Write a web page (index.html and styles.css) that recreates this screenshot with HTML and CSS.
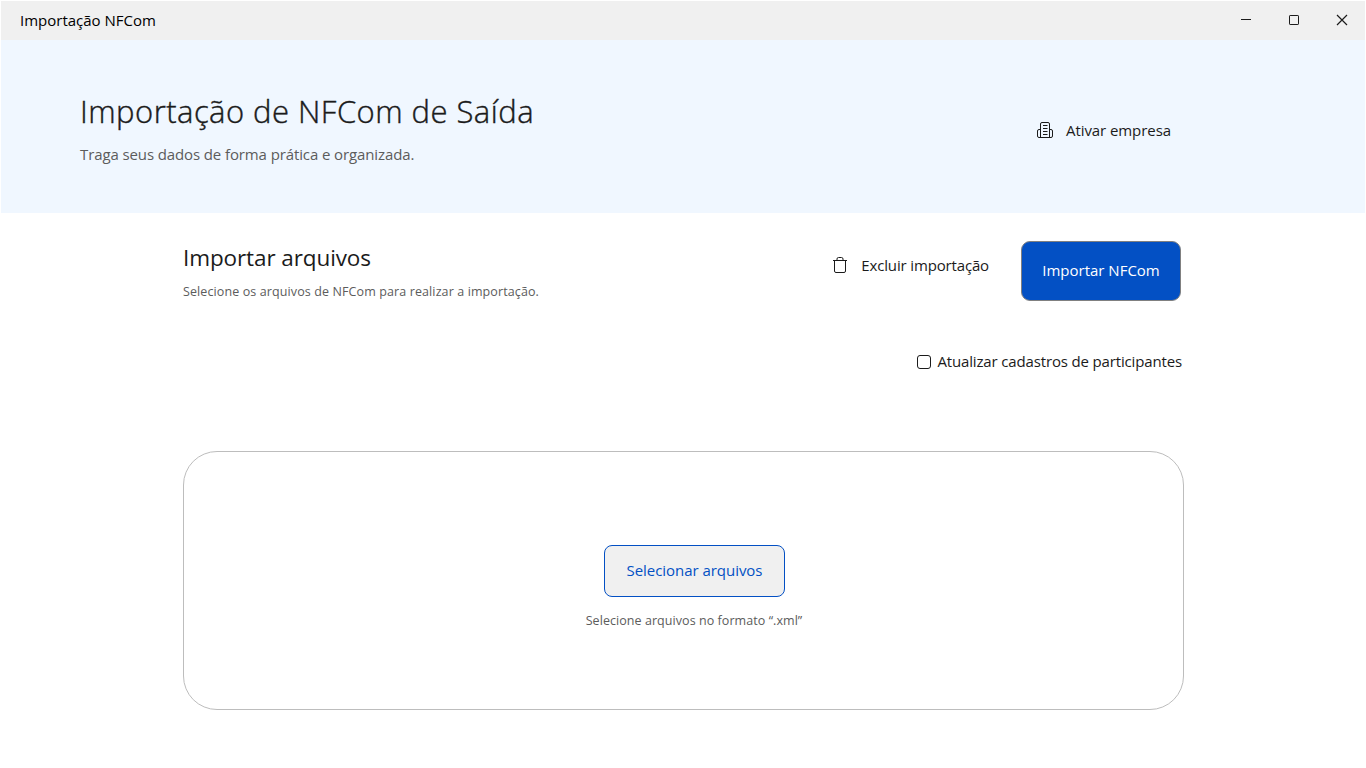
FILE: index.html
```html
<!DOCTYPE html>
<html lang="pt-BR">
<head>
    <meta charset="UTF-8" />
    <meta name="viewport" content="width=device-width, initial-scale=1.0" />
    <title>Importação NFCom</title>
    <link rel="stylesheet" href="styles.css">
</head>
<body>
    <!-- Title bar -->
    <header class="titlebar">
        <span class="titlebar-text">Importação NFCom</span>
        <div class="titlebar-controls">
            <svg class="control" viewBox="0 0 12 12"><path d="M1 5.5h10" /></svg>
            <svg class="control" viewBox="0 0 12 12"><rect x="1.5" y="1.5" width="9" height="9" rx="0.6" /></svg>
            <svg class="control" viewBox="0 0 12 12"><path d="M1 1l10 10M11 1L1 11" stroke-width="1.2" /></svg>
        </div>
    </header>

    <!-- Hero -->
    <section class="hero">
        <div class="hero-texts">
            <h1 class="hero-title">Importação de NFCom de Saída</h1>
            <p class="hero-subtitle">Traga seus dados de forma prática e organizada.</p>
        </div>
        <button class="btn-link btn-company" type="button">
            <svg class="icon" viewBox="0 0 18 18">
                <path d="M4.5 16.5V3A1.5 1.5 0 0 1 6 1.5h6A1.5 1.5 0 0 1 13.5 3v13.5" />
                <path d="M4.5 8.5H3A1.5 1.5 0 0 0 1.5 10v5A1.5 1.5 0 0 0 3 16.5h12a1.5 1.5 0 0 0 1.5-1.5v-5A1.5 1.5 0 0 0 15 8.5h-1.5" />
                <path d="M7 4.5h4.5M7 7.5h4.5M7 10.5h4.5M7 13.5h4.5" />
            </svg>
            <span class="company-text">Ativar empresa</span>
        </button>
    </section>

    <!-- Import section -->
    <main class="container">
        <div class="import-row">
            <div class="import-texts">
                <h2 class="import-title">Importar arquivos</h2>
                <p class="import-subtitle">Selecione os arquivos de NFCom para realizar a importação.</p>
            </div>
            <div class="import-actions">
                <button class="btn-link btn-delete" type="button">
                    <svg class="icon" viewBox="0 0 18 18">
                        <path d="M2 4.5h14M3.5 4.5V15A1.5 1.5 0 0 0 5 16.5h8a1.5 1.5 0 0 0 1.5-1.5V4.5M6 4.5V3a1.5 1.5 0 0 1 1.5-1.5h3A1.5 1.5 0 0 1 12 3v1.5" />
                    </svg>
                    <span class="delete-text">Excluir importação</span>
                </button>
                <button class="btn-main" type="button">Importar NFCom</button>
            </div>
        </div>

        <label class="update-row">
            <input type="checkbox" class="checkbox" />
            <span class="update-text">Atualizar cadastros de participantes</span>
        </label>

        <div class="dropzone">
            <button class="btn-select" type="button">Selecionar arquivos</button>
            <p class="dropzone-text">Selecione arquivos no formato “.xml”</p>
        </div>
    </main>
</body>
</html>
```

FILE: styles.css
```css
/* Global CSS */
*,
*::before,
*::after {
    box-sizing: border-box;
}

body {
    margin: 0;
    padding: 1px 1px 0;
    height: 768px;
    overflow: hidden;
    font-family: 'Open Sans', 'Noto Sans', sans-serif;
    font-size: 15px;
    line-height: 20px;
    color: #1b1b1b;
    background: #fff;
    white-space: nowrap;
}

h1,
h2,
p {
    margin: 0;
    font-weight: 400;
}

button {
    font-family: inherit;
    font-size: 15px;
    line-height: 20px;
    color: inherit;
    padding: 0;
}

svg {
    display: block;
    fill: none;
    stroke: #1b1b1b;
    stroke-width: 1;
}

/* Title bar */
.titlebar {
    display: flex;
    justify-content: space-between;
    align-items: center;
    height: 39px;
    padding: 0 17px 1px 19px;
    background: #f0f0f0;
}

.titlebar-text {
    color: #000;
}

.titlebar-controls {
    display: flex;
    gap: 36px;
}

.control {
    width: 12px;
    height: 12px;
}

/* Hero */
.hero {
    display: flex;
    justify-content: space-between;
    height: 173px;
    padding: 49px 194px 0 79px;
    background: #f0f7ff;
}

.hero-title {
    font-size: 31px;
    font-weight: 300;
    line-height: 44px;
    letter-spacing: 0.46px;
    -webkit-text-stroke: 0.4px #1b1b1b;
}

.hero-subtitle {
    margin-top: 11px;
    letter-spacing: -0.11px;
    color: #5c5c5c;
}

.btn-link {
    display: flex;
    align-items: center;
    height: 20px;
    border: none;
    background: none;
}

.icon {
    width: 18px;
    height: 18px;
}

.btn-company {
    margin-top: 31px;
    gap: 12px;
    letter-spacing: -0.07px;
}

/* Import section */
.container {
    width: 1001px;
    margin-left: 182px;
    padding-top: 28px;
}

.import-row {
    display: flex;
    justify-content: space-between;
    height: 60px;
    padding-right: 3px;
}

.import-title {
    font-size: 22.5px;
    line-height: 34px;
    letter-spacing: -0.1px;
}

.import-subtitle {
    margin-top: 7px;
    font-size: 12.5px;
    letter-spacing: 0.11px;
    color: #5c5c5c;
}

.import-actions {
    display: flex;
    gap: 32px;
}

.btn-delete {
    margin-top: 14px;
    gap: 12px;
    letter-spacing: -0.15px;
}

.btn-main {
    width: 160px;
    height: 60px;
    padding-bottom: 2px;
    border: 1px solid #808080;
    border-radius: 9px;
    background: #0350c4;
    color: #fff;
}

.update-row {
    display: flex;
    justify-content: flex-end;
    align-items: center;
    gap: 6px;
    height: 20px;
    margin-top: 51px;
    padding-right: 2px;
}

.update-text {
    padding-bottom: 2px;
    letter-spacing: -0.15px;
}

.checkbox {
    appearance: none;
    width: 14px;
    height: 14px;
    margin: 0;
    border: 1px solid #1b1b1b;
    border-radius: 3px;
}

/* Drop zone */
.dropzone {
    display: flex;
    flex-direction: column;
    align-items: center;
    height: 259px;
    margin-top: 79px;
    padding: 93px 0 0 21px;
    border: 1px solid #bdbdbd;
    border-radius: 34px;
}

.btn-select {
    width: 181px;
    height: 52px;
    padding: 0 0 2px 1px;
    border: 1px solid #0350c4;
    border-radius: 8px;
    background: #f0f0f0;
    color: #0350c4;
    letter-spacing: -0.04px;
}

.dropzone-text {
    margin-top: 14px;
    font-size: 12.5px;
    letter-spacing: 0.06px;
    color: #5c5c5c;
}
```
